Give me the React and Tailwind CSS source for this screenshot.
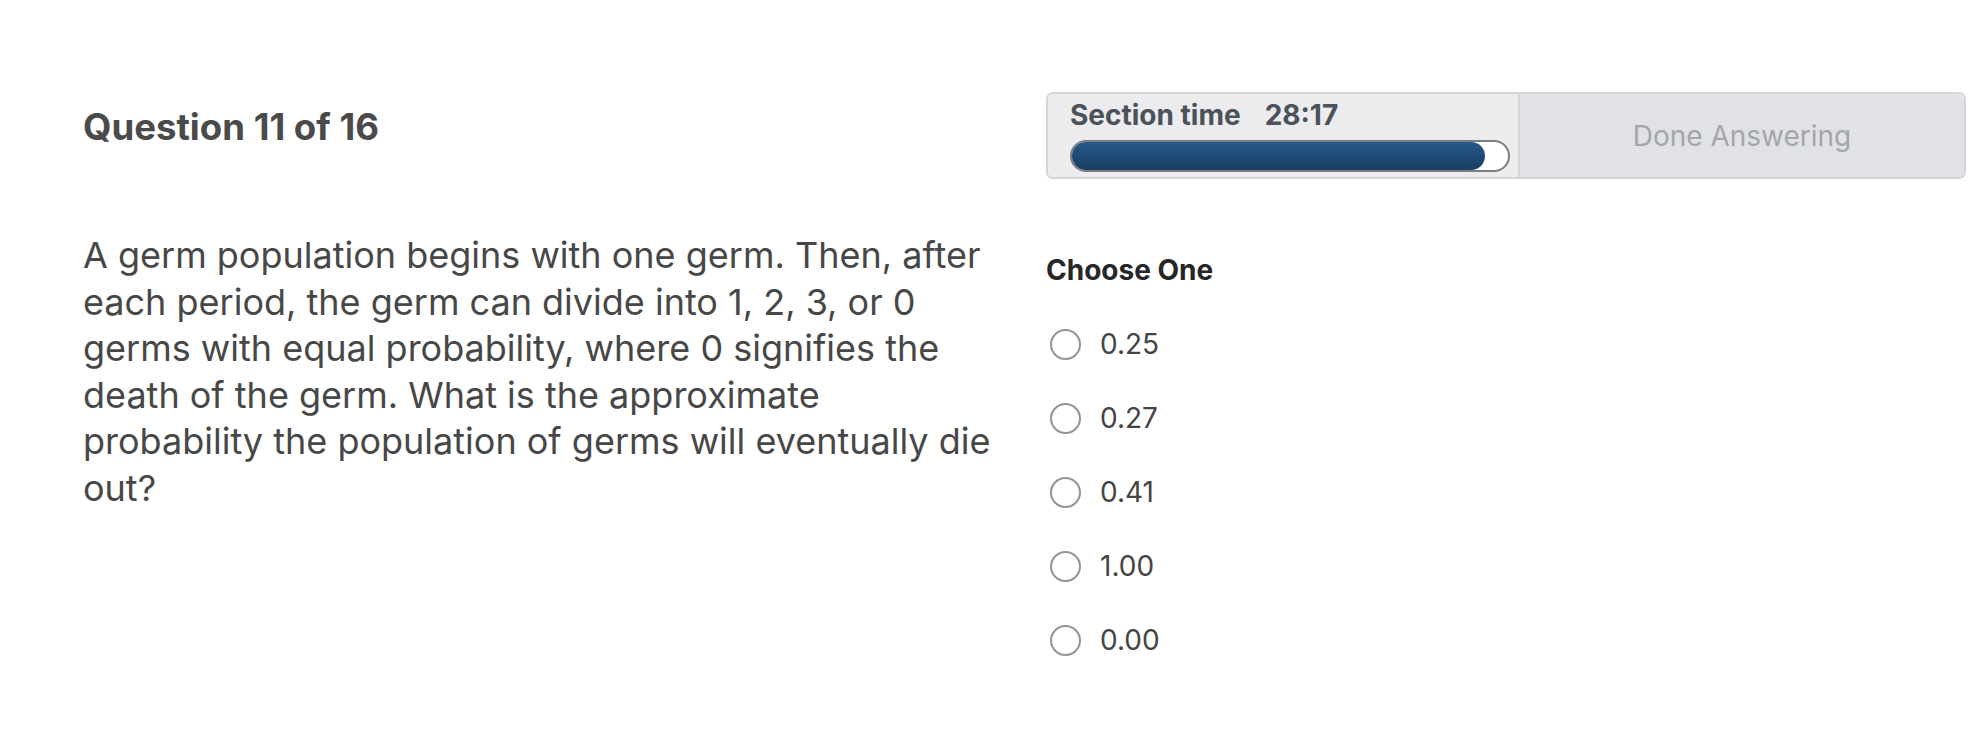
import React, { useState } from "react";

const options = ["0.25", "0.27", "0.41", "1.00", "0.00"];

function Radio({ label, checked, onSelect }) {
  return (
    <label className="flex h-[74px] cursor-pointer items-center" onClick={onSelect}>
      <span className="ml-[4px] flex h-[31px] w-[31px] items-center justify-center rounded-full border-2 border-[#8f949a] bg-white">
        {checked && <span className="h-[15px] w-[15px] rounded-full bg-[#1f4e79]" />}
      </span>
      <span className="ml-[19px] text-[28px] text-[#444]">{label}</span>
    </label>
  );
}

function Timer() {
  return (
    <div className="flex h-[87px] overflow-hidden rounded-[7px] border-2 border-[#d4d5d8]">
      <div className="flex w-[470px] flex-col bg-[#ececee] pl-[22px] pr-[8px] pt-[4px]">
        <div className="text-[28px] font-bold leading-[34px] text-[#4b525a]">
          Section time<span className="ml-[24px]">28:17</span>
        </div>
        <div className="mt-[8px] h-[32px] w-[440px] rounded-full border-2 border-[#7b7d80] bg-white">
          <div className="h-full w-[413px] rounded-full bg-gradient-to-b from-[#25598a] to-[#1a3d61]" />
        </div>
      </div>
      <div className="w-[2px] bg-[#d4d5d8]" />
      <button className="flex-1 bg-[#e1e2e5] text-[28px] text-[#a4a6a9]" disabled>
        Done Answering
      </button>
    </div>
  );
}

export default function App() {
  const [selected, setSelected] = useState(null);

  return (
    <div className="flex min-h-[740px] bg-white pl-[83px] pr-[20px] pt-[92px] font-['Inter',sans-serif]">
      <div className="w-[925px] shrink-0">
        <h1 className="mt-[13px] text-[36.6px] font-bold leading-[44px] text-[#4a4a4a]">
          Question 11 of 16
        </h1>
        <p className="mt-[83px] text-[36px] leading-[46.6px] text-[#474747]">
          A germ population begins with one germ. Then, after each period, the germ can divide
          into 1, 2, 3, or 0 germs with equal probability, where 0 signifies the death of the
          germ. What is the approximate probability the population of germs will eventually die
          out?
        </p>
      </div>

      <div className="ml-[38px] flex-1">
        <Timer />
        <div className="mt-[74px] text-[28px] font-bold leading-[34px] text-[#262626]">
          Choose One
        </div>
        <div className="mt-[20px]">
          {options.map((o) => (
            <Radio key={o} label={o} checked={selected === o} onSelect={() => setSelected(o)} />
          ))}
        </div>
      </div>
    </div>
  );
}
